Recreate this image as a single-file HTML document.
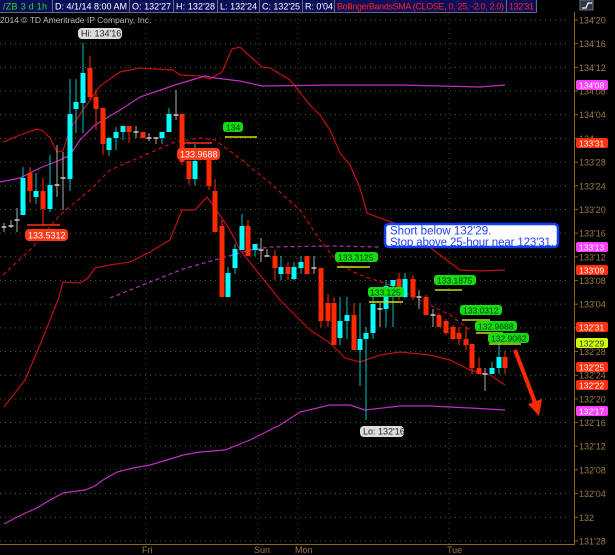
<!DOCTYPE html>
<html><head><meta charset="utf-8"><style>
html,body{margin:0;padding:0;background:#000;width:615px;height:555px;overflow:hidden}
svg{display:block}
text{font-family:"Liberation Sans",sans-serif}
</style></head><body>
<svg id="s" width="615" height="555" viewBox="0 0 615 555" xmlns="http://www.w3.org/2000/svg">
<rect width="615" height="555" fill="#000"/>
<g id="grid"></g>
<rect x="0" y="0" width="537" height="12" fill="#0b0f5a"/>
<g stroke="#6a6a7a" stroke-width="1">
<line x1="52.5" y1="0" x2="52.5" y2="12"/><line x1="129.5" y1="0" x2="129.5" y2="12"/>
<line x1="173.5" y1="0" x2="173.5" y2="12"/><line x1="217.5" y1="0" x2="217.5" y2="12"/>
<line x1="259.5" y1="0" x2="259.5" y2="12"/><line x1="302.5" y1="0" x2="302.5" y2="12"/>
<line x1="334.5" y1="0" x2="334.5" y2="12"/><line x1="506.5" y1="0" x2="506.5" y2="12"/>
<line x1="536.5" y1="0" x2="536.5" y2="12"/><line x1="0" y1="12.5" x2="537" y2="12.5"/>
</g>
<g font-size="9" fill="#fff">
<text x="3" y="9.5" fill="#22dd22" textLength="44">/ZB 3 d 1h</text>
<text x="55" y="9.5" textLength="72">D: 4/1/14 8:00 AM</text>
<text x="132" y="9.5" textLength="39">O: 132'27</text>
<text x="176" y="9.5" textLength="39">H: 132'28</text>
<text x="220" y="9.5" textLength="37">L: 132'24</text>
<text x="262" y="9.5" textLength="38">C: 132'25</text>
<text x="305" y="9.5" textLength="28">R: 0'04</text>
<text x="337" y="9.5" fill="#ff2020" textLength="167">BollingerBandsSMA (CLOSE, 0, 25, -2.0, 2.0)</text>
<text x="509" y="9.5" fill="#ff2020" textLength="25">132'31</text>
</g>
<rect x="580" y="0" width="13" height="10" fill="#2a3540" stroke="#889" stroke-width="0.8"/>
<path d="M582 8 L586 8 L588 3 L592 3" stroke="#fff" fill="none" stroke-width="1.2"/>
<text x="0" y="23" font-size="8.5" fill="#bbb">2014 © TD Ameritrade IP Company, Inc.</text>
<line x1="574.5" y1="12" x2="574.5" y2="545" stroke="#8a6420"/>
<line x1="0" y1="544.5" x2="575" y2="544.5" stroke="#8a6420"/>
<g font-size="9" fill="#9a7a3c" id="axl"></g>
<g font-size="9" fill="#9a7a3c">
<text x="142" y="553">Fri</text><text x="254" y="553">Sun</text><text x="295" y="553">Mon</text><text x="447" y="553">Tue</text>
</g>
<g fill="none" stroke-width="1.2">
<polyline stroke="#c01010" points="3,142 20,135 37,129 43,131 50,138 57,152 63,151 70,129 83,110 100,86 120,72 140,68 173,70 180,75 200,76 210,79 222,72 232,49 240,47 262,67 270,68 290,80 310,105 320,115 330,130 340,153 350,165 360,188 367,213 380,218 400,225 420,240 440,255 460,270 480,271 505,270"/>
<polyline stroke="#c01010" points="4,407 25,380 40,345 58,300 63,282 80,283 88,278 95,268 110,265 130,262 150,252 170,240 182,210 195,210 207,197 215,208 230,230 240,250 260,275 280,300 300,320 310,330 330,343 345,358 360,362 380,355 400,352 430,355 450,360 470,370 490,375 505,385"/>
<polyline stroke="#c030c0" points="0,182 20,178 40,168 60,160 70,155 80,140 95,125 120,110 140,97 175,85 205,76 215,78 240,81 262,86 330,85 400,85 480,87 505,85"/>
<polyline stroke="#c030c0" points="4,524 17,517 30,511 37,508 50,500 63,493 70,492 85,490 95,486 103,480 117,472 133,468 150,465 167,460 183,455 200,452 225,450 250,440 280,425 300,412 330,405 350,405 365,410 400,406 430,406 470,408 505,410"/>
<polyline stroke="#c01010" stroke-dasharray="4,3" points="3,275 30,250 60,215 90,190 110,170 145,155 175,142 200,138 215,140 242,160 260,175 270,183 300,210 320,240 340,265 360,275 390,285 420,300 450,315 470,330"/>
<polyline stroke="#b030b0" stroke-dasharray="4,3" points="110,298 183,269 250,250 270,247 330,246 380,247"/>
</g>
<g id="cd"></g>
<g stroke="#d0e000" stroke-width="1.5">
<line x1="225" y1="137" x2="257" y2="137"/><line x1="337" y1="267" x2="370" y2="267"/>
<line x1="369" y1="302" x2="403" y2="302"/><line x1="435" y1="290" x2="462" y2="290"/>
<line x1="462" y1="320" x2="490" y2="320"/><line x1="476" y1="333" x2="503" y2="333"/>
<line x1="489" y1="344" x2="521" y2="344"/>
</g>
<g stroke="#ff3010" stroke-width="1.5"><line x1="27" y1="225" x2="60" y2="225"/><line x1="180" y1="143" x2="212" y2="143"/></g>
<g font-size="9">
<rect x="78" y="28" width="44" height="11" rx="4" fill="#ddd"/><text x="81" y="36.5" fill="#222">Hi: 134'16</text>
<rect x="360" y="426" width="44" height="11" rx="4" fill="#ddd"/><text x="363" y="434.5" fill="#222">Lo: 132'16</text>
<rect x="25" y="229" width="43" height="12" rx="4" fill="#ff3a1a"/><text x="28" y="238.5" fill="#fff">133.5312</text>
<rect x="177" y="148" width="43" height="12" rx="4" fill="#ff3a1a"/><text x="180" y="157.5" fill="#fff">133.9688</text>
<g fill="#11dd11">
<rect x="223" y="122" width="20" height="10" rx="3"/><rect x="335" y="252" width="43" height="10" rx="3"/>
<rect x="368" y="287" width="36" height="10" rx="3"/><rect x="434" y="275" width="42" height="10" rx="3"/>
<rect x="460" y="305" width="42" height="10" rx="3"/><rect x="475" y="321" width="42" height="10" rx="3"/>
<rect x="488" y="333" width="41" height="10" rx="3"/>
</g>
<g fill="#003300" font-size="8.5">
<text x="226" y="130.5">134</text><text x="338" y="260.5">133.3125</text><text x="370" y="295.5">133.125</text>
<text x="437" y="283.5">133.1875</text><text x="463" y="313.5">133.0312</text><text x="478" y="329.5">132.9688</text><text x="491" y="341.5">132.9062</text>
</g>
</g>
<rect x="385" y="224" width="173" height="23" rx="4" fill="#fff" stroke="#1040ff" stroke-width="2.5"/>
<text x="390" y="234.5" font-size="11.5" fill="#2040ff">Short below 132'29.</text>
<text x="390" y="246" font-size="11.5" fill="#2040ff" textLength="164">Stop above 25-hour near 123'31.</text>
<line x1="515" y1="350" x2="536" y2="405" stroke="#ff2a00" stroke-width="4"/>
<polygon points="528,404 542,399 539,416" fill="#ff2a00"/>
<g font-size="8.5" id="bd"></g>
</svg>
<script>
var ns="http://www.w3.org/2000/svg";
function el(p,t,a,txt){var e=document.createElementNS(ns,t);for(var k in a)e.setAttribute(k,a[k]);if(txt)e.textContent=txt;document.getElementById(p).appendChild(e);return e;}
var full=[];for(var i=0;i<=22;i++){var v=134*32+20-4*i;var w=Math.floor(v/32),f=v%32;full.push(f==0?""+w:w+"'"+(f<10?"0"+f:f));}
for(var i=0;i<=22;i++){var y=20+i*23.68;
el("grid","line",{x1:0,y1:y,x2:570,y2:y,stroke:"#6a5020","stroke-dasharray":"1,4"});
el("grid","line",{x1:574,y1:y,x2:578,y2:y,stroke:"#8a6420"});
el("axl","text",{x:579,y:y+3.5},full[i]);}
[146,258,298,449].forEach(function(x){el("grid","line",{x1:x,y1:13,x2:x,y2:544,stroke:"#5a4520","stroke-dasharray":"1,4"});});
var C=[[4,227,227,223,232,'g'],[11,226,226,220,228,'g'],[17,220,220,208,232,'g'],[23,178,215,167,215,'c'],[30,173,191,167,203,'r'],[36,191,197,173,204,'c'],[43,191,209,178,225,'r'],[50,185,209,155,212,'c'],[57,185,185,145,197,'g'],[63,178,178,152,210,'g'],[70,114,179,79,191,'c'],[76,102,109,79,133,'c'],[83,73,103,43,133,'c'],[90,68,97,56,100,'r'],[96,97,109,90,130,'r'],[103,108,144,108,155,'r'],[109,138,150,137,156,'c'],[116,132,138,127,150,'c'],[123,126,132,126,140,'c'],[129,126,132,126,143,'r'],[136,132,132,126,138,'g'],[143,132,138,132,138,'r'],[149,138,138,133,141,'g'],[156,138,138,138,144,'g'],[162,132,138,132,144,'c'],[169,114,132,108,132,'c'],[176,115,115,90,120,'g'],[182,114,162,114,165,'r'],[189,161,179,161,185,'r'],[195,161,179,144,185,'c'],[209,160,186,150,190,'r'],[215,191,232,179,232,'r'],[222,226,297,220,297,'r'],[228,273,297,267,297,'c'],[235,249,268,244,274,'c'],[242,226,250,214,250,'c'],[248,226,256,220,256,'r'],[255,244,250,244,256,'c'],[261,250,250,238,262,'g'],[267,256,256,249,256,'g'],[275,256,268,250,280,'r'],[281,267,274,256,280,'c'],[288,267,274,262,280,'r'],[294,267,279,262,280,'c'],[301,262,268,256,274,'c'],[307,256,274,256,274,'r'],[314,268,268,256,274,'g'],[321,268,321,268,327,'r'],[328,303,321,294,327,'r'],[334,303,345,297,345,'r'],[340,321,338,297,345,'c'],[347,315,321,297,339,'c'],[354,315,350,303,350,'r'],[360,339,350,303,386,'c'],[366,333,339,327,420,'c'],[373,304,333,297,339,'c'],[380,309,309,303,327,'g'],[386,286,309,280,327,'c'],[393,280,286,280,327,'c'],[399,279,290,273,300,'r'],[405,279,297,273,298,'c'],[413,279,297,275,300,'r'],[419,297,297,290,309,'g'],[426,297,315,295,315,'r'],[433,315,315,309,327,'g'],[439,315,327,313,327,'r'],[446,321,333,319,335,'r'],[453,327,339,325,340,'r'],[459,333,339,327,345,'r'],[466,339,345,327,350,'r'],[472,344,368,344,374,'r'],[479,368,374,357,374,'r'],[485,374,374,368,391,'g'],[492,368,374,362,374,'c'],[499,357,368,339,374,'c'],[505,357,368,351,374,'r']];
var col={r:"#ff2a00",c:"#00ffff",g:"#cccccc"},wc={r:"#ff2a00",c:"#00c0c0",g:"#aaaaaa"};
C.forEach(function(d){var x=d[0],a=Math.min(d[1],d[2]),b=Math.max(d[1],d[2]);
el("cd","line",{x1:x,y1:d[3],x2:x,y2:d[4],stroke:wc[d[5]],"stroke-width":1});
if(d[5]=='g'){el("cd","line",{x1:x-2.5,y1:a,x2:x+2.5,y2:a,stroke:"#ccc","stroke-width":1.5});}
else el("cd","rect",{x:x-2.5,y:a,width:5,height:Math.max(b-a,2),fill:col[d[5]]});});
[["134'08",85,"#ff40ff","#fff"],["133'31",143,"#ff3010","#fff"],["133'13",247,"#ff40ff","#fff"],["133'09",270,"#ff3010","#fff"],["132'31",327,"#ff3010","#fff"],["132'29",343,"#ccff00","#333"],["132'25",367,"#ff3010","#fff"],["132'22",385,"#ff3010","#fff"],["132'17",411,"#ff40ff","#fff"]].forEach(function(b){
el("bd","rect",{x:576,y:b[1]-5,width:32,height:10,rx:2,fill:b[2]});el("bd","text",{x:579,y:b[1]+3.5,fill:b[3]},b[0]);});
</script>
</body></html>
